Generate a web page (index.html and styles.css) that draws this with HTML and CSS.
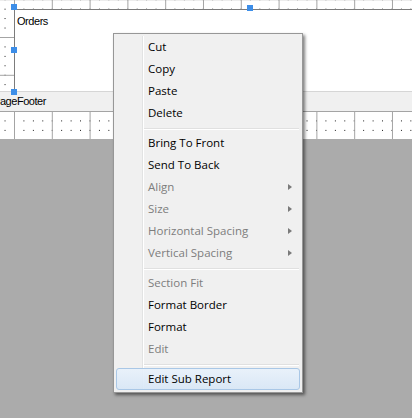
FILE: index.html
```html
<!DOCTYPE html>
<html>
<head>
<meta charset="utf-8">
<link rel="stylesheet" href="styles.css">
</head>
<body>
<div class="screen">
  <div class="designer">
    <div class="section detail grid">
      <div class="subreport"><span class="sub-title">Orders</span></div>
    </div>
    <div class="band-label"><span class="band-text">PageFooter</span></div>
    <div class="section footer grid grid-footer"></div>
  </div>
  <div class="workspace"></div>

  <span class="handle h-tl"></span>
  <span class="handle h-tm"></span>
  <span class="handle h-ml"></span>
  <span class="handle h-bl"></span>

  <div class="menu">
    <div class="item">Cut</div>
    <div class="item">Copy</div>
    <div class="item">Paste</div>
    <div class="item">Delete</div>
    <div class="sep"></div>
    <div class="item">Bring To Front</div>
    <div class="item">Send To Back</div>
    <div class="item disabled">Align<span class="arrow"></span></div>
    <div class="item disabled">Size<span class="arrow"></span></div>
    <div class="item disabled">Horizontal Spacing<span class="arrow"></span></div>
    <div class="item disabled">Vertical Spacing<span class="arrow"></span></div>
    <div class="sep"></div>
    <div class="item disabled">Section Fit</div>
    <div class="item">Format Border</div>
    <div class="item">Format</div>
    <div class="item disabled">Edit</div>
    <div class="sep"></div>
    <div class="item hover">Edit Sub Report</div>
  </div>
</div>
</body>
</html>
```

FILE: styles.css
```css
html, body {
  margin: 0;
  padding: 0;
}
body {
  width: 412px;
  height: 418px;
  overflow: hidden;
  background: #ababab;
}
.screen {
  position: relative;
  width: 412px;
  height: 418px;
  overflow: hidden;
  background: #ababab;
  display: flex;
  flex-direction: column;
}
.designer {
  display: flex;
  flex-direction: column;
  background: #ffffff;
}
.grid {
  background-color: #ffffff;
  background-image:
    linear-gradient(to right, #a4a4a4 1px, transparent 1px),
    linear-gradient(to bottom, #a4a4a4 1px, transparent 1px),
    conic-gradient(from 270deg at 1px 1px, #000000 90deg, transparent 0);
  background-size: 37.8px 37.8px, 37.8px 37.8px, 9.45px 9.45px;
}
.detail {
  height: 91px;
  background-position: 14px 37px, 14px 37px, 14px 37px;
  display: flex;
  flex-direction: column;
}
.subreport {
  margin-left: 14px;
  margin-top: 9px;
  flex: 1;
  background: #ffffff;
  border-left: 1px solid #7c7c7c;
  border-top: 1px solid #7c7c7c;
  padding: 1px 0 0 2px;
}
.sub-title, .band-text {
  font-family: "Liberation Sans", Arial, sans-serif;
  font-size: 11px;
  letter-spacing: -0.45px;
  color: #000;
  line-height: 13px;
}
.band-label {
  height: 19px;
  border-top: 1px solid #d6d6d6;
  background: #f0f0f0;
  display: flex;
  align-items: center;
  overflow: hidden;
}
.band-text {
  margin-left: -7px;
}
.footer {
  height: 28px;
  background-position: 14px 0, 14px 0, 14px 0;
}
.workspace {
  flex: 1;
  background: #ababab;
}

.handle {
  position: absolute;
  width: 6px;
  height: 6px;
  background: #3d8ee8;
}
.h-tl { left: 11px; top: 4px; }
.h-tm { left: 247px; top: 5px; }
.h-ml { left: 11px; top: 47px; }
.h-bl { left: 11px; top: 89px; }

.menu {
  position: absolute;
  left: 113px;
  top: 33px;
  width: 190px;
  box-sizing: border-box;
  border: 1px solid #979797;
  background: #f0f0f0;
  padding: 2px;
  box-shadow: 2px 2px 3px rgba(0, 0, 0, 0.5);
  display: flex;
  flex-direction: column;
  font-family: "Open Sans", "Noto Sans", sans-serif;
  font-size: 11.5px;
}
.menu::before {
  content: "";
  position: absolute;
  left: 28px;
  top: 2px;
  bottom: 2px;
  width: 1px;
  background: #e2e3e3;
  border-right: 1px solid #ffffff;
}
.item {
  position: relative;
  height: 22px;
  line-height: 22px;
  padding-left: 32px;
  color: #000000;
  display: flex;
  align-items: center;
  white-space: nowrap;
  box-sizing: border-box;
}
.item.disabled {
  color: #7d7d7d;
}
.item.hover {
  border: 1px solid #a9c7e6;
  border-radius: 3px;
  padding-left: 31px;
  background: linear-gradient(to bottom, rgba(232, 241, 251, 0.92), rgba(216, 231, 246, 0.92));
}
.arrow {
  margin-left: auto;
  margin-right: 8px;
  width: 0;
  height: 0;
  border-left: 4px solid #7a7a7a;
  border-top: 3.5px solid transparent;
  border-bottom: 3.5px solid transparent;
}
.sep {
  position: relative;
  height: 8px;
  margin-left: 28px;
}
.sep::after {
  content: "";
  position: absolute;
  left: 0;
  right: 1px;
  top: 4px;
  height: 1px;
  background: #e0e0e0;
  border-bottom: 1px solid #ffffff;
}
```
